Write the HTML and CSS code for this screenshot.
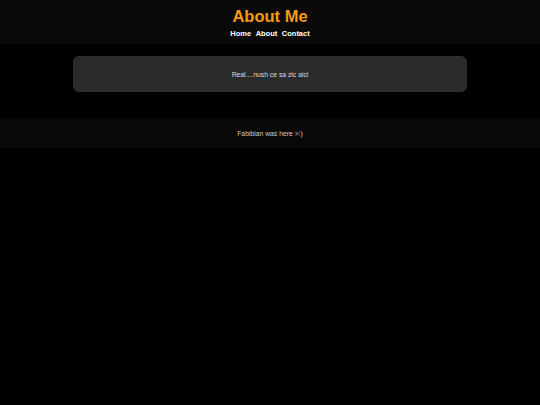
FILE: index.html
```html
<!DOCTYPE html>
<html>
<head>
<meta charset="utf-8">
<link rel="stylesheet" href="styles.css">
</head>
<body>
<header class="top">
  <h1 class="title">About Me</h1>
  <nav class="nav">
    <a href="#">Home</a>
    <a href="#">About</a>
    <a href="#">Contact</a>
  </nav>
</header>
<main class="main">
  <section class="card">Real....nush ce sa zic aici</section>
</main>
<footer class="foot">Fabibian was here &gt;:)</footer>
</body>
</html>
```

FILE: styles.css
```css
html, body {
  margin: 0;
  padding: 0;
  background: #000;
  font-family: "Liberation Sans", Arial, sans-serif;
}
.top {
  background: #0a0a0a;
  height: 44px;
  display: flex;
  flex-direction: column;
  align-items: center;
  box-sizing: border-box;
  padding-top: 6px;
}
.title {
  margin: 0;
  color: #f39c12;
  font-size: 16.5px;
  line-height: 20px;
  font-weight: bold;
}
.nav {
  display: flex;
  gap: 4.5px;
  margin-top: 3px;
}
.nav a {
  color: #fff;
  text-decoration: none;
  font-weight: bold;
  font-size: 7.5px;
  line-height: 10px;
}
.main {
  padding: 12px 73px 26px;
}
.card {
  background: #2a2a2a;
  border-radius: 6px;
  height: 36px;
  display: flex;
  align-items: center;
  justify-content: center;
  color: #ddd;
  font-size: 6.8px;
  border: 1px solid #2f2f2f;
  box-sizing: border-box;
}
.foot {
  background: #080808;
  height: 30px;
  display: flex;
  align-items: center;
  justify-content: center;
  color: #ccc;
  font-size: 6.8px;
}
```
